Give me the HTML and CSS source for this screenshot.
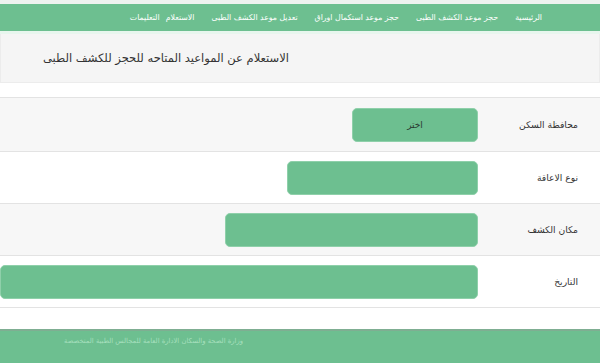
FILE: index.html
```html
<!DOCTYPE html>
<html lang="ar" dir="rtl">
<head>
    <meta charset="UTF-8">
    <title>الاستعلام عن المواعيد</title>
    <link rel="stylesheet" href="styles.css">
</head>
<body>
    <div class="top-strip"></div>
    <nav class="main-nav">
        <a href="#">الرئيسية</a>
        <a href="#">حجز موعد الكشف الطبى</a>
        <a href="#">حجز موعد استكمال اوراق</a>
        <a href="#">تعديل موعد الكشف الطبى</a>
        <a href="#">الاستعلام</a>
        <a href="#" class="tight">التعليمات</a>
    </nav>

    <div class="page-header">
        <h2>الاستعلام عن المواعيد المتاحه للحجز للكشف الطبى</h2>
    </div>

    <div class="form-table">
        <div class="form-row shaded">
            <div class="form-label">محافظة السكن</div>
            <div class="form-field"><div class="green-select w-gov">اختر</div></div>
        </div>
        <div class="form-row">
            <div class="form-label">نوع الاعاقة</div>
            <div class="form-field"><div class="green-select w-type"></div></div>
        </div>
        <div class="form-row shaded">
            <div class="form-label">مكان الكشف</div>
            <div class="form-field"><div class="green-select w-place"></div></div>
        </div>
        <div class="form-row">
            <div class="form-label">التاريخ</div>
            <div class="form-field"><div class="green-select w-date"></div></div>
        </div>
    </div>

    <footer>
        <p>وزارة الصحة والسكان الادارة العامة للمجالس الطبية المتخصصة</p>
    </footer>
</body>
</html>
```

FILE: styles.css
```css
* {
    margin: 0;
    padding: 0;
    box-sizing: border-box;
}

body {
    width: 600px;
    height: 363px;
    overflow: hidden;
    background-color: #fff;
    font-family: "DejaVu Sans", "Noto Sans", sans-serif;
    color: #333;
}

.top-strip {
    height: 4px;
    background-color: #eef2ef;
}

.main-nav {
    height: 27px;
    background-color: #6dbf90;
    border-bottom: 3px solid #e8f6ee;
    display: flex;
    align-items: center;
    padding-right: 58px;
    gap: 17px;
    box-sizing: content-box;
}

.main-nav a {
    color: #fff;
    text-decoration: none;
    font-size: 7.8px;
    white-space: nowrap;
}

.main-nav a.tight {
    margin-right: -11px;
}

.page-header {
    height: 49px;
    background-color: #f5f5f5;
    border: 1px solid #ececec;
    border-top: none;
    display: flex;
    align-items: center;
    justify-content: flex-end;
    padding-left: 42px;
}

.page-header h2 {
    font-size: 11.5px;
    font-weight: normal;
    color: #333;
}

.form-table {
    margin-top: 14px;
    border-top: 1px solid #e3e3e3;
}

.form-row {
    display: flex;
    align-items: center;
    height: 52px;
    border-bottom: 1px solid #e3e3e3;
}

.form-row:first-child {
    height: 54px;
}

.form-row.shaded {
    background-color: #f7f7f7;
}

.form-label {
    width: 122px;
    padding-right: 22px;
    font-size: 9.2px;
    color: #333;
}

.form-field {
    flex: 1;
}

.green-select {
    height: 34px;
    background-color: #6dbf90;
    border: 1px solid #8fd0aa;
    border-radius: 5px;
    display: flex;
    align-items: center;
    justify-content: center;
    font-size: 9px;
    color: #2a3a30;
}

.w-gov { width: 126px; }
.w-type { width: 191px; }
.w-place { width: 253px; }
.w-date { width: 478px; }

footer {
    margin-top: 21px;
    height: 34px;
    background-color: #6dbf90;
    border-top: 2px solid #7fae92;
    display: flex;
    justify-content: flex-end;
    padding-left: 64px;
    padding-top: 6px;
}

footer p {
    font-size: 6.8px;
    color: #a6dfbd;
}
```
